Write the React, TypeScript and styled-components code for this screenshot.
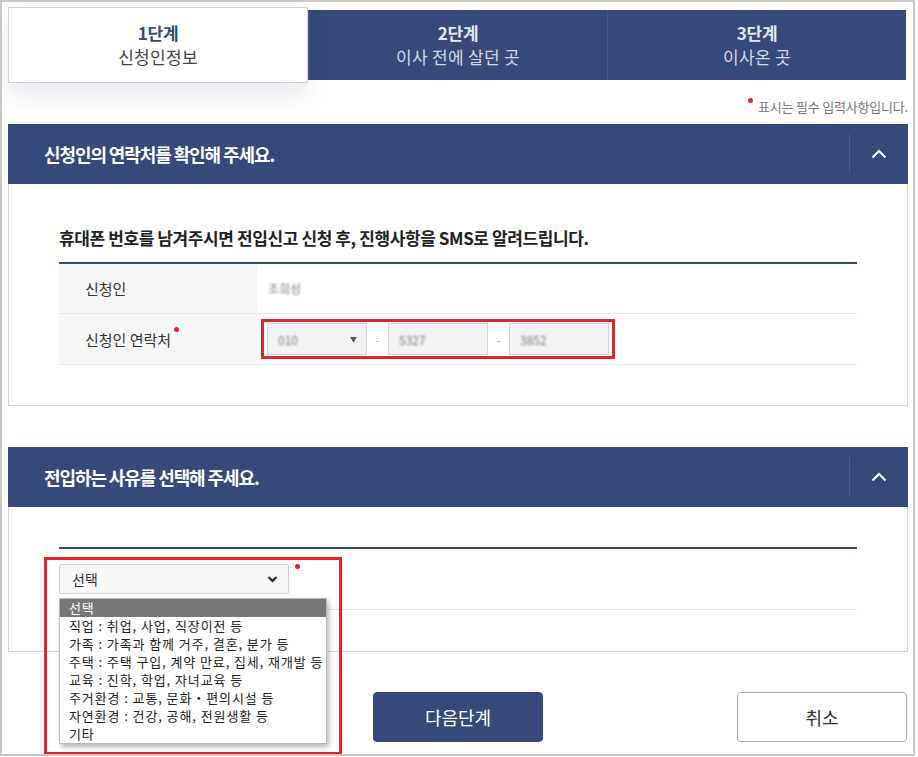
import styled, { createGlobalStyle } from "styled-components";

const NAVY = "#36497a";
const RED = "#e3232c";

const GlobalStyle = createGlobalStyle`
    html, body {
        margin: 0;
        padding: 0;
        background: #fff;
    }
    body {
        font-family: "Noto Sans CJK KR", "Noto Sans", sans-serif;
        color: #333;
    }
    * {
        box-sizing: border-box;
    }
`;

const Frame = styled.div`
    width: 915px;
    height: 756px;
    border: 2px solid #c8c8c8;
    padding: 5px 5px 0 6px;
    overflow: hidden;
    background: #fff;
`;

const TabBar = styled.div`
    display: flex;
    align-items: center;
    height: 76px;
    margin-right: 2px;
`;

const Tab = styled.div<{ $active?: boolean }>`
    flex: 1;
    height: ${(p) => (p.$active ? "76px" : "70px")};
    display: flex;
    flex-direction: column;
    align-items: center;
    justify-content: center;
    background: ${(p) => (p.$active ? "#fff" : NAVY)};
    border: ${(p) => (p.$active ? "1px solid #cdd1dc" : "none")};
    box-shadow: ${(p) => (p.$active ? "0 12px 22px rgba(40, 50, 80, 0.10)" : "none")};
    position: relative;
    z-index: ${(p) => (p.$active ? 2 : 1)};

    & + & {
        border-left: ${(p) => (p.$active ? "1px solid #cdd1dc" : "1px solid #44578a")};
    }
`;

const TabStep = styled.div<{ $active?: boolean }>`
    font-size: 17px;
    font-weight: 700;
    line-height: 24px;
    letter-spacing: -0.2px;
    color: ${(p) => (p.$active ? NAVY : "#e4e7ef")};
`;

const TabName = styled.div<{ $active?: boolean }>`
    font-size: 17px;
    line-height: 24px;
    letter-spacing: 0.3px;
    color: ${(p) => (p.$active ? "#444" : "#d3d8e4")};
`;

const Notice = styled.div`
    height: 41px;
    display: flex;
    justify-content: flex-end;
    align-items: flex-start;
    padding-top: 14px;
    font-size: 13px;
    color: #777;
    letter-spacing: -0.2px;
`;

const Dot = styled.span`
    display: inline-block;
    width: 5px;
    height: 5px;
    border-radius: 50%;
    background: ${RED};
    vertical-align: top;
`;

const NoticeDot = styled(Dot)`
    margin: 0 5px 0 0;
    position: relative;
    top: 1px;
`;

const Section = styled.section`
    & + & {
        margin-top: 41px;
    }
`;

const SectionHeader = styled.div`
    height: 60px;
    background: ${NAVY};
    display: flex;
    align-items: center;
`;

const SectionTitle = styled.h2`
    flex: 1;
    margin: 0;
    padding-left: 36px;
    font-size: 18px;
    font-weight: 700;
    letter-spacing: -1.1px;
    color: #fff;
`;

const Toggle = styled.div`
    width: 59px;
    height: 40px;
    border-left: 1px solid #4a5c8c;
    display: flex;
    align-items: center;
    justify-content: center;
`;

const SectionBody = styled.div<{ $bottom: number }>`
    border: 1px solid #d4d4d4;
    border-top: none;
    padding: 40px 50px ${(p) => p.$bottom}px;
`;

const Intro = styled.p`
    margin: 2px 0 12px;
    font-size: 17px;
    font-weight: 700;
    line-height: 24px;
    letter-spacing: -0.4px;
    color: #222;
`;

const Table = styled.div`
    border-top: 2px solid ${NAVY};
`;

const Row = styled.div<{ $height?: number }>`
    display: flex;
    align-items: stretch;
    height: ${(p) => p.$height ?? 50}px;
    border-bottom: 1px solid #e6e6e6;
`;

const Label = styled.div`
    width: 198px;
    background: #f7f7f7;
    display: flex;
    align-items: center;
    padding-left: 26px;
    font-size: 15px;
    color: #333;
`;

const LabelDot = styled(Dot)`
    margin-left: 3px;
    position: relative;
    top: -10px;
`;

const Value = styled.div`
    flex: 1;
    display: flex;
    align-items: center;
    padding-left: 11px;
`;

const Masked = styled.span`
    font-size: 12px;
    color: #7a7a88;
    filter: blur(0.9px);
`;

const Highlight = styled.div`
    display: flex;
    align-items: center;
    margin-left: -7px;
    border: 3px solid ${RED};
    padding: 1px 3px;
`;

const Field = styled.div<{ $width: number }>`
    width: ${(p) => p.$width}px;
    height: 32px;
    background: #f3f3f3;
    border: 1px solid #d6d6d6;
    display: flex;
    align-items: center;
    justify-content: space-between;
    padding: 0 9px 0 10px;
`;

const Dash = styled.span`
    width: 21px;
    text-align: center;
    font-size: 12px;
    color: #aaa;
`;

const Arrow = styled.span`
    font-size: 7px;
    color: #555;
    filter: blur(0.5px);
`;

const SelectWrap = styled.div`
    position: relative;
    display: flex;
    align-items: center;
`;

const SelectBox = styled.div`
    width: 230px;
    height: 30px;
    background: #f8f8f8;
    border: 1px solid #cfcfcf;
    border-radius: 2px;
    display: flex;
    align-items: center;
    justify-content: space-between;
    padding: 0 10px 0 12px;
    font-size: 14px;
    color: #333;
`;

const SelectDot = styled(Dot)`
    position: absolute;
    left: 236px;
    top: 0px;
`;

const Annotation = styled.div`
    position: absolute;
    left: -15px;
    top: -7px;
    width: 298px;
    height: 198px;
    border: 3px solid ${RED};
    pointer-events: none;
    z-index: 6;
`;

const OptionList = styled.ul`
    position: absolute;
    left: 0;
    top: 34px;
    width: 268px;
    margin: 0;
    padding: 0;
    list-style: none;
    background: #fff;
    border: 1px solid #b9b9b9;
    box-shadow: 2px 3px 5px rgba(0, 0, 0, 0.28);
    z-index: 5;
`;

const Option = styled.li<{ $selected?: boolean }>`
    height: 18px;
    line-height: 18px;
    padding: 0 9px;
    font-size: 13px;
    white-space: nowrap;
    letter-spacing: 0.9px;
    color: ${(p) => (p.$selected ? "#fff" : "#222")};
    background: ${(p) => (p.$selected ? "#777" : "transparent")};
`;

const SelectRow = styled.div`
    height: 61px;
    display: flex;
    align-items: center;
    border-bottom: 1px solid #e6e6e6;
`;

const Buttons = styled.div`
    display: grid;
    grid-template-columns: 1fr auto 1fr;
    align-items: center;
    margin-top: 40px;
`;

const Button = styled.button<{ $primary?: boolean }>`
    grid-column: ${(p) => (p.$primary ? 2 : 3)};
    justify-self: ${(p) => (p.$primary ? "center" : "end")};
    width: 170px;
    height: 50px;
    margin-right: ${(p) => (p.$primary ? 0 : 1)}px;
    border-radius: 4px;
    border: 1px solid ${(p) => (p.$primary ? NAVY : "#a9a9a9")};
    background: ${(p) => (p.$primary ? NAVY : "#fff")};
    color: ${(p) => (p.$primary ? "#fff" : "#333")};
    font-family: "Noto Sans CJK KR", "Noto Sans", sans-serif;
    font-size: 18px;
    cursor: pointer;
`;

function Chevron() {
    return (
        <svg width="16" height="10" viewBox="0 0 16 10">
            <polyline points="1.5,8.5 8,2 14.5,8.5" fill="none" stroke="#fff" strokeWidth="2" />
        </svg>
    );
}

function SmallCaret() {
    return (
        <svg width="11" height="8" viewBox="0 0 11 8">
            <polyline points="1.5,2 5.5,6 9.5,2" fill="none" stroke="#222" strokeWidth="2.2" />
        </svg>
    );
}

const steps = [
    { step: "1단계", name: "신청인정보" },
    { step: "2단계", name: "이사 전에 살던 곳" },
    { step: "3단계", name: "이사온 곳" },
];

const reasons = [
    "선택",
    "직업 : 취업, 사업, 직장이전 등",
    "가족 : 가족과 함께 거주, 결혼, 분가 등",
    "주택 : 주택 구입, 계약 만료, 집세, 재개발 등",
    "교육 : 진학, 학업, 자녀교육 등",
    "주거환경 : 교통, 문화・편의시설 등",
    "자연환경 : 건강, 공해, 전원생활 등",
    "기타",
];

export default function App() {
    return (
        <>
            <GlobalStyle />
            <Frame>
                <TabBar>
                    {steps.map((s, i) => (
                        <Tab key={s.step} $active={i === 0}>
                            <TabStep $active={i === 0}>{s.step}</TabStep>
                            <TabName $active={i === 0}>{s.name}</TabName>
                        </Tab>
                    ))}
                </TabBar>

                <Notice>
                    <NoticeDot />
                    표시는 필수 입력사항입니다.
                </Notice>

                <Section>
                    <SectionHeader>
                        <SectionTitle>신청인의 연락처를 확인해 주세요.</SectionTitle>
                        <Toggle>
                            <Chevron />
                        </Toggle>
                    </SectionHeader>
                    <SectionBody $bottom={40}>
                        <Intro>휴대폰 번호를 남겨주시면 전입신고 신청 후, 진행사항을 SMS로 알려드립니다.</Intro>
                        <Table>
                            <Row $height={50}>
                                <Label>신청인</Label>
                                <Value>
                                    <Masked>조희성</Masked>
                                </Value>
                            </Row>
                            <Row $height={51}>
                                <Label>
                                    신청인 연락처
                                    <LabelDot />
                                </Label>
                                <Value>
                                    <Highlight>
                                        <Field $width={100}>
                                            <Masked>010</Masked>
                                            <Arrow>▼</Arrow>
                                        </Field>
                                        <Dash>-</Dash>
                                        <Field $width={100}>
                                            <Masked>5327</Masked>
                                        </Field>
                                        <Dash>-</Dash>
                                        <Field $width={100}>
                                            <Masked>3852</Masked>
                                        </Field>
                                    </Highlight>
                                </Value>
                            </Row>
                        </Table>
                    </SectionBody>
                </Section>

                <Section>
                    <SectionHeader>
                        <SectionTitle>전입하는 사유를 선택해 주세요.</SectionTitle>
                        <Toggle>
                            <Chevron />
                        </Toggle>
                    </SectionHeader>
                    <SectionBody $bottom={41}>
                        <Table>
                            <SelectRow>
                                <SelectWrap>
                                    <SelectBox>
                                        선택
                                        <SmallCaret />
                                    </SelectBox>
                                    <SelectDot />
                                    <OptionList>
                                        {reasons.map((r, i) => (
                                            <Option key={r} $selected={i === 0}>
                                                {r}
                                            </Option>
                                        ))}
                                    </OptionList>
                                    <Annotation />
                                </SelectWrap>
                            </SelectRow>
                        </Table>
                    </SectionBody>
                </Section>

                <Buttons>
                    <Button $primary>다음단계</Button>
                    <Button>취소</Button>
                </Buttons>
            </Frame>
        </>
    );
}
